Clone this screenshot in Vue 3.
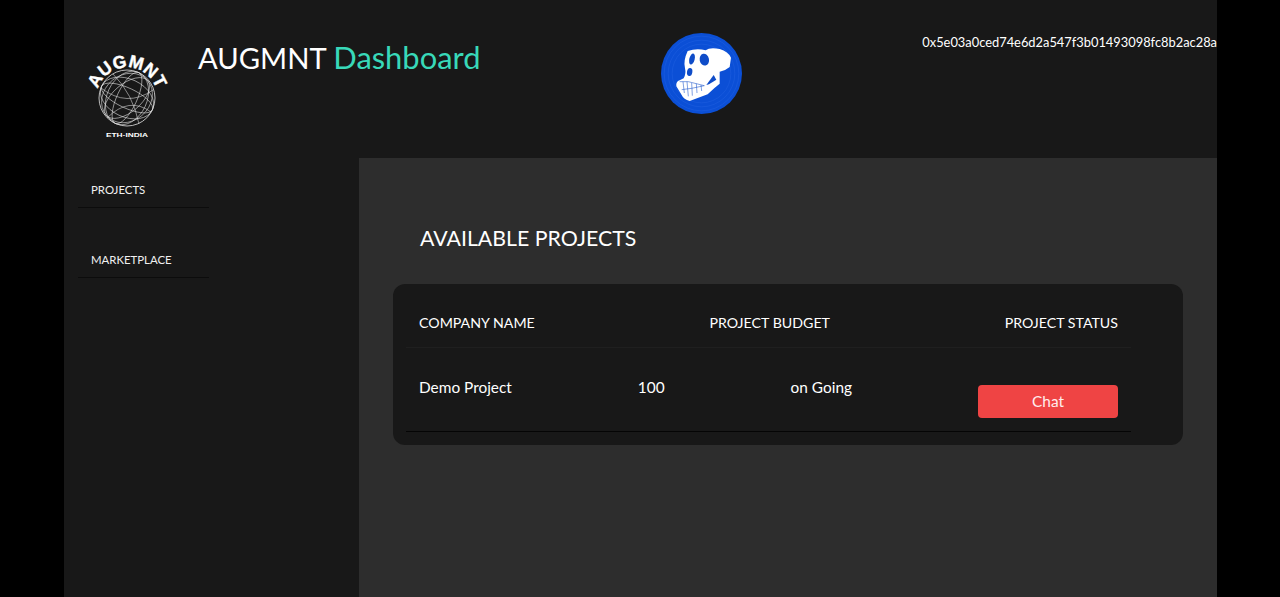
<template>
  <div class="page">
    <header class="topbar">
      <svg class="logo" viewBox="0 0 100 100" width="100" height="100">
        <defs>
          <path id="logoArc" d="M23.6 67.25 A30.5 30.5 0 1 1 76.4 67.25" fill="none" />
        </defs>
        <text class="logo-arc"><textPath href="#logoArc" startOffset="50%" text-anchor="middle">AUGMNT</textPath></text>
        <g fill="none" stroke="#e4e4e4" stroke-width="0.55">
          <circle cx="50" cy="52" r="28" stroke-width="0.8" />
          <ellipse cx="50" cy="52" rx="28" ry="10" transform="rotate(25 50 52)" />
          <ellipse cx="50" cy="52" rx="28" ry="19" transform="rotate(25 50 52)" />
          <ellipse cx="50" cy="52" rx="10" ry="28" transform="rotate(25 50 52)" />
          <ellipse cx="50" cy="52" rx="20" ry="28" transform="rotate(25 50 52)" />
          <ellipse cx="50" cy="52" rx="27" ry="14" transform="rotate(-40 50 52)" />
          <ellipse cx="50" cy="52" rx="27" ry="23" transform="rotate(-40 50 52)" />
          <path d="M24 42 Q50 62 76 44 M30 72 Q52 50 74 66 M36 28 Q56 48 62 78" />
        </g>
        <text class="logo-sub" x="50" y="91" text-anchor="middle" textLength="42" lengthAdjust="spacingAndGlyphs">ETH-INDIA</text>
      </svg>
      <h1 class="title">AUGMNT <span>Dashboard</span></h1>
      <svg class="ape" viewBox="30 24 243 243" width="81" height="81">
        <circle cx="151.5" cy="145.5" r="121.5" fill="#0b4fd6" />
        <g fill="none" stroke="#2a68e6" stroke-width="1.5" opacity="0.7">
          <circle cx="151.5" cy="145.5" r="112" />
          <circle cx="151.5" cy="145.5" r="100" />
          <circle cx="151.5" cy="145.5" r="88" />
        </g>
        <path d="M110 78 Q138 68 164 76 Q176 66 206 72 Q232 80 240 98 L236 126 Q222 138 206 140 L206 176 Q190 188 170 208 L116 228 Q98 224 92 210 L76 184 Q74 170 86 166 L98 160 Q106 146 102 130 Q96 108 110 78Z" fill="#fff" />
        <ellipse cx="123" cy="102" rx="8" ry="17" transform="rotate(14 123 102)" fill="#0f4cc8" />
        <ellipse cx="160" cy="104" rx="14" ry="18" transform="rotate(-12 160 104)" fill="#0f4cc8" />
        <ellipse cx="116" cy="141" rx="8" ry="12" transform="rotate(10 116 141)" fill="#0f4cc8" />
        <path d="M166 180 L188 150 L196 164 L174 178Z" fill="#0f4cc8" />
        <path d="M86 170 L112 170 L160 182 M92 194 L122 190 L160 182 M96 170 L100 204 M108 170 L112 214 M122 174 L124 212 M136 176 L138 204 M150 180 L152 198" fill="none" stroke="#0f4cc8" stroke-width="1.6" />
      </svg>
      <div class="wallet">0x5e03a0ced74e6d2a547f3b01493098fc8b2ac28a</div>
    </header>

    <div class="body">
      <nav class="sidebar">
        <a v-for="item in navItems" :key="item" class="nav-item">{{ item }}</a>
      </nav>

      <main class="content">
        <h2 class="heading">AVAILABLE PROJECTS</h2>
        <section class="card">
          <div class="row head">
            <span v-for="col in columns" :key="col">{{ col }}</span>
          </div>
          <div v-for="p in projects" :key="p.name" class="row item">
            <span>{{ p.name }}</span>
            <span>{{ p.budget }}</span>
            <span>{{ p.status }}</span>
            <button class="chat">Chat</button>
          </div>
        </section>
      </main>
    </div>
  </div>
</template>

<script setup>
const navItems = ["PROJECTS", "MARKETPLACE"];
const columns = ["COMPANY NAME", "PROJECT BUDGET", "PROJECT STATUS"];
const projects = [{ name: "Demo Project", budget: 100, status: "on Going" }];
</script>

<style>
body {
  background: #000;
}
</style>

<style scoped>
.page,
.page * {
  box-sizing: border-box;
}

.page {
  width: 1153px;
  height: 597px;
  margin-left: 64px;
  overflow: hidden;
  display: flex;
  flex-direction: column;
  background: #181818;
  color: #fff;
  font-family: Lato, "Open Sans", sans-serif;
}

.topbar {
  height: 158px;
  flex: none;
  display: flex;
  align-items: flex-start;
  position: relative;
}

.logo {
  margin: 46px 0 0 13px;
  flex: none;
  overflow: visible;
}

.logo-arc {
  font-family: "Liberation Sans", sans-serif;
  font-size: 17.6px;
  font-weight: 700;
  fill: #fff;
  stroke: #fff;
  stroke-width: 0.4px;
}

.logo-sub {
  font-family: "Liberation Sans", sans-serif;
  font-size: 6px;
  font-weight: 700;
  fill: #fff;
}

.title {
  margin: 39px 0 0 21px;
  width: 400px;
  flex: none;
  font-size: 29.2px;
  line-height: 38px;
  font-weight: 400;
}

.title span {
  font-size: 30.9px;
  color: #38d9b9;
}

.ape {
  margin: 33px 0 0 63px;
  flex: none;
}

.wallet {
  position: absolute;
  right: 0;
  top: 34px;
  font-size: 12.87px;
  line-height: 17px;
  white-space: nowrap;
}

.body {
  flex: 1;
  display: flex;
}

.sidebar {
  width: 295px;
  flex: none;
  padding: 20px 0 0 14px;
  display: flex;
  flex-direction: column;
  gap: 40px;
}

.nav-item {
  width: 131px;
  height: 30px;
  padding-left: 13px;
  border-bottom: 1px solid #0c0c0c;
  font-size: 11.4px;
  line-height: 24px;
  color: #f0f0f0;
}

.content {
  flex: 1;
  padding: 65px 34px 0;
  background: #2d2d2d;
}

.heading {
  margin: 0 0 31px 27px;
  font-size: 21.3px;
  line-height: 30px;
  font-weight: 400;
}

.card {
  padding: 0 52px 13px 13px;
  border-radius: 12px;
  background: #181818;
}

.row {
  display: flex;
  justify-content: space-between;
  padding: 0 13px;
}

.head {
  height: 64px;
  padding-top: 29px;
  font-size: 14.2px;
  line-height: 20px;
  border-bottom: 1px solid #1f1f1f;
}

.item {
  height: 84px;
  padding-top: 29px;
  font-size: 15.4px;
  line-height: 20px;
  border-bottom: 1px solid #050505;
}

.chat {
  width: 140px;
  height: 33px;
  margin-top: 8px;
  padding: 0 0 2px;
  border: 0;
  border-radius: 4px;
  background: #ef4444;
  color: #fee;
  font-family: inherit;
  font-size: 15.4px;
}
</style>
